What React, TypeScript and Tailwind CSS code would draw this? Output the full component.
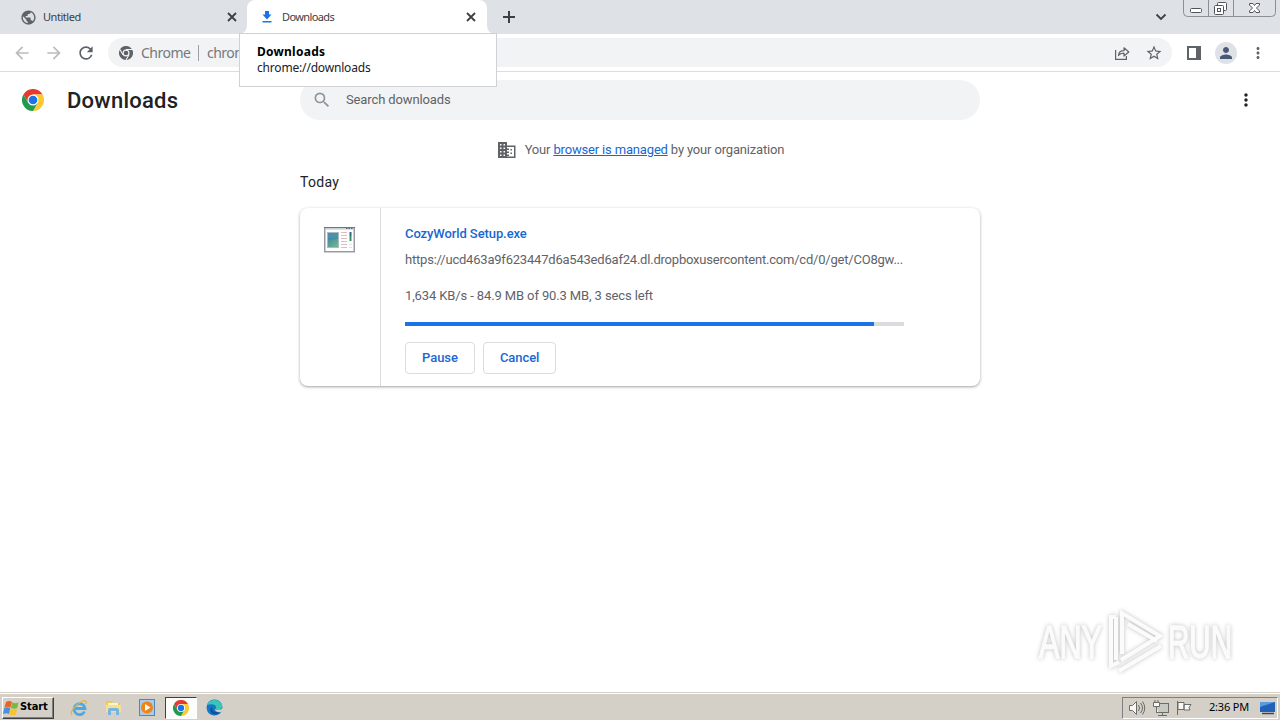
import type { ReactNode } from "react";
import {
  MdArrowBack,
  MdArrowForward,
  MdMoreVert,
  MdPerson,
  MdPublic,
  MdRefresh,
  MdSearch,
  MdStarBorder,
} from "react-icons/md";

function ChromeLogo({ size, mono = false }: { size: number; mono?: boolean }) {
  const red = mono ? "#5f6368" : "#e33b2e";
  const green = mono ? "#5f6368" : "#229a4b";
  const yellow = mono ? "#5f6368" : "#fcc934";
  return (
    <svg width={size} height={size} viewBox="0 0 48 48" className="shrink-0">
      <path d="M24 12h20.8A24 24 0 0 0 3.2 12l10.4 18z" fill={red} />
      <path d="M34.4 30 24 48A24 24 0 0 0 44.8 12H24z" fill={yellow} />
      <path d="M13.6 30 3.2 12A24 24 0 0 0 24 48l10.4-18z" fill={green} />
      {mono && (
        <path d="M24 12h22M34.4 30 23 50M13.6 30 2 10" stroke="#f1f3f4" strokeWidth="3.5" />
      )}
      <circle cx="24" cy="24" r="12" fill={mono ? "#f1f3f4" : "#fff"} />
      <circle cx="24" cy="24" r={mono ? 8 : 9.5} fill={mono ? "#5f6368" : "#1a73e8"} />
    </svg>
  );
}

function CloseIcon() {
  return (
    <svg width="14" height="14" viewBox="0 0 14 14">
      <path d="m3 3 8 8M11 3l-8 8" stroke="#3c4043" strokeWidth="1.800" />
    </svg>
  );
}

function TabStrip() {
  return (
    <div className="flex h-[34px] shrink-0 bg-[#dee1e6] font-['Noto_Sans',sans-serif] text-[11px] text-[#3c4043]">
      <div className="flex w-[247px] items-center pl-5">
        <MdPublic size={17} className="text-[#5f6368]" />
        <span className="ml-[6px] w-[182px] tracking-[-0.45px]">Untitled</span>
        <CloseIcon />
      </div>
      <div className="relative flex w-[240px] items-center rounded-t-lg bg-white pl-[15px]">
        <svg width="8" height="8" className="absolute bottom-0 -left-2">
          <path d="M8 0v8H0a8 8 0 0 0 8-8z" fill="#fff" />
        </svg>
        <svg width="8" height="8" className="absolute -right-2 bottom-0">
          <path d="M0 0v8h8a8 8 0 0 1-8-8z" fill="#fff" />
        </svg>
        <svg width="10" height="12" viewBox="0 0 10 12" fill="#1a73e8">
          <path d="M3 0h4v3.500h2.500L5 8.500.500 3.500H3zM.500 10h9v1.500h-9z" />
        </svg>
        <span className="ml-[10px] w-[182px] tracking-[-0.62px]">Downloads</span>
        <CloseIcon />
      </div>
      <svg width="14" height="14" viewBox="0 0 14 14" className="mt-[10px] ml-[15px]">
        <path d="M7 1v12M1 7h12" stroke="#3c4043" strokeWidth="2" />
      </svg>
      <div className="ml-auto flex">
        <svg width="12" height="8" viewBox="0 0 12 8" className="mt-[13px] mr-[16px]">
          <path d="M1.500 1.500 6 6l4.500-4.500" fill="none" stroke="#3c4043" strokeWidth="1.800" />
        </svg>
        <WindowControls />
      </div>
    </div>
  );
}

function WindowControls() {
  return (
    <svg width="93" height="17" viewBox="0 0 93 17" className="mr-1" fill="none">
      <path d="M.5 0v12.500q0 4 4 4h84q4 0 4-4V0M25.500 0v16M50.500 0v16" stroke="#8b8f96" />
      <g stroke="#50545c" fill="#fff">
        <rect x="7.500" y="8.500" width="11" height="4" rx="1" />
        <rect x="34.500" y="2.500" width="9" height="8" rx="1" />
        <rect x="31.500" y="5.500" width="9" height="9" rx="1" />
        <rect x="34.500" y="8.500" width="3" height="3" />
        <path d="M66.500 3.500h3.500l1.500 2 1.500-2h3.500v1.500l-3 3 3 3v1.500H73l-1.500-2-1.500 2h-3.500v-1.500l3-3-3-3z" />
      </g>
    </svg>
  );
}

function Toolbar() {
  return (
    <div className="flex h-[38px] shrink-0 items-center border-b border-[#dadce0] bg-white pl-3 text-[#5f6368]">
      <MdArrowBack size={20} className="text-[#babcbe]" />
      <MdArrowForward size={20} className="ml-3 text-[#babcbe]" />
      <MdRefresh size={20} className="ml-3" />
      <div className="ml-[12px] flex h-[29px] w-[1064px] items-center rounded-full bg-[#f1f3f4] pl-[11px] font-['Noto_Sans',sans-serif] text-sm">
        <ChromeLogo size={14} mono />
        <span className="ml-2 w-[57px] tracking-[-0.5px] text-[#75797e]">Chrome</span>
        <span className="h-4 w-px bg-[#9aa0a6]" />
        <span className="ml-2 tracking-[-0.5px] text-[#75797e]">chrome://downloads</span>
        <svg width="16" height="16" viewBox="0 0 16 16" className="ml-auto" fill="none" stroke="#5f6368" strokeWidth="1.200">
          <path d="M1.600 5v9.400h10.800V11" />
          <path d="M4.500 10.500c.3-3.500 2.500-4.800 5.500-4.800V2.800l4.800 4.200L10 11V8.200c-2.500 0-4.200.6-5.500 2.300z" strokeLinejoin="round" />
        </svg>
        <MdStarBorder size={18} className="mr-[9px] ml-[15px]" />
      </div>
      <svg width="14" height="14" viewBox="0 0 14 14" className="ml-[15px]">
        <path d="M0 0h14v14H0zM2 2v10h7V2z" fill="#5f6368" fillRule="evenodd" />
      </svg>
      <div className="ml-[14px] flex size-[22px] items-center justify-center rounded-full bg-[#dee1e6]">
        <MdPerson size={18} className="text-[#4a5878]" />
      </div>
      <MdMoreVert size={18} className="ml-[12px]" />
    </div>
  );
}

function TabTooltip() {
  return (
    <div className="absolute top-[33px] left-[239px] h-[54px] w-[258px] border border-[#cfd1d4] bg-white pt-[10px] pl-[17px] font-['Noto_Sans',sans-serif] text-[12px] leading-4 text-[#202124]">
      <div className="font-bold tracking-[0.25px] text-black">Downloads</div>
      <div className="tracking-[-0.18px]">chrome://downloads</div>
    </div>
  );
}

function PageHeader() {
  return (
    <div className="flex h-14 shrink-0 items-center">
      <div className="flex w-[300px] items-center pl-[22px]">
        <ChromeLogo size={22} />
        <h1 className="ml-[23px] text-[22px] font-medium tracking-[0.25px] text-[#202124]">Downloads</h1>
      </div>
      <div className="flex h-10 w-[680px] items-center rounded-full bg-[#f1f3f4] pl-3 text-[13px] text-[#5f6368]">
        <MdSearch size={20} className="text-[#909498]" />
        <span className="ml-[14px] tracking-[-0.12px]">Search downloads</span>
      </div>
      <MdMoreVert size={20} className="mr-6 ml-auto text-[#202124]" />
    </div>
  );
}

function ActionButton({ children }: { children: ReactNode }) {
  return (
    <button className="h-8 rounded border border-[#dadce0] px-4 text-[13px] font-medium tracking-[-0.05px] text-[#1967d2]">
      {children}
    </button>
  );
}

function ExeIcon() {
  return (
    <svg width="32" height="27" viewBox="0 0 32 27">
      <defs>
        <linearGradient id="exe" x1="0" y1="0" x2="0.6" y2="1">
          <stop offset="0" stopColor="#4f86bd" />
          <stop offset="0.5" stopColor="#4b96a0" />
          <stop offset="1" stopColor="#6bb583" />
        </linearGradient>
      </defs>
      <rect x=".75" y="1.750" width="29.500" height="24" fill="#fff" stroke="#989ca2" strokeWidth="1.500" />
      <path d="M1.500 3h28" stroke="#ccd3dc" strokeWidth="1.500" />
      <path d="M0 1.500h31" stroke="#70757c" />
      <path d="M22 2.500h1.500m1 0H26m1 0h1.500" stroke="#596672" />
      <rect x="3.500" y="6.500" width="11" height="15" fill="url(#exe)" stroke="#a9bcc6" />
      <path d="M4 13c4-1 7 1 10-2" stroke="#3a86a5" fill="none" />
      <path d="M17 6.500h6M17 9.500h6M17 12.500h6M17 15.500h6M17 18.500h6M17 21.500h6" stroke="#e0bdbd" />
      <path d="M26.500 6v4" stroke="#2b5fa0" strokeWidth="2" />
      <path d="M26.500 10v5" stroke="#369060" strokeWidth="2" />
      <path d="M25 18.500h3M25 21.500h3" stroke="#dfe3e6" />
    </svg>
  );
}

function DownloadCard() {
  const received = 84.9;
  const total = 90.3;
  return (
    <div className="flex h-[178px] w-[680px] rounded-lg bg-white shadow-[0_1px_2px_rgba(60,64,67,0.3),0_1px_3px_1px_rgba(60,64,67,0.15)]">
      <div className="flex w-[81px] justify-center border-r border-[#dadce0] pt-[18px]">
        <ExeIcon />
      </div>
      <div className="flex flex-col pl-6 text-[13px] leading-5 text-[#5f6368]">
        <div className="mt-4 font-medium tracking-[-0.09px] text-[#1967d2]">CozyWorld Setup.exe</div>
        <div className="mt-[6px] w-[520px] tracking-[-0.21px] whitespace-nowrap">
          https://ucd463a9f623447d6a543ed6af24.dl.dropboxusercontent.com/cd/0/get/CO8gw...
        </div>
        <div className="mt-4 tracking-[-0.12px]">1,634 KB/s - 84.9 MB of 90.3 MB, 3 secs left</div>
        <div className="mt-4 h-1 w-[499px] bg-[#dadce0]">
          <div className="h-full bg-[#1a73e8]" style={{ width: `${(received / total) * 100}%` }} />
        </div>
        <div className="mt-4 flex gap-2">
          <ActionButton>Pause</ActionButton>
          <ActionButton>Cancel</ActionButton>
        </div>
      </div>
    </div>
  );
}

function Watermark() {
  return (
    <svg
      width="210"
      height="70"
      viewBox="0 0 210 70"
      className="absolute top-[605px] left-[1034px] overflow-visible drop-shadow-[0_0_2px_rgba(0,0,0,0.25)]"
      fill="#fbfbfb"
    >
      <g fontFamily="Liberation Sans" fontSize="47" stroke="#fbfbfb" strokeWidth="1.500">
        <text x="5" y="53" textLength="63" lengthAdjust="spacingAndGlyphs">ANY</text>
        <text x="134" y="53" textLength="64" lengthAdjust="spacingAndGlyphs">RUN</text>
      </g>
      <g fill="none" stroke="#fbfbfb" strokeWidth="4">
        <path d="M88 49V8l38 23-39 24M94 19l29 17" />
        <path d="M82 12h-5v49l8-4M82 12v43M85 66l42-25" />
      </g>
    </svg>
  );
}

function StartFlag() {
  return (
    <svg width="17" height="16" viewBox="0 0 17 16" className="shrink-0">
      <path d="M3 2q3-2 6 0L7.500 7.500Q5 6 1.500 7.500z" fill="#e8622c" />
      <path d="M9.500 2.300q3 1.700 6 0L14.300 8q-3 1.500-6.500 0z" fill="#7db83c" />
      <path d="M1.300 8q3-1.700 6 0L6 14q-3-1.700-6 0z" fill="#4a8fd8" />
      <path d="M7.700 8.500q3 1.700 6.500 0L13 14.500q-3 1.700-6.500 0z" fill="#f7c331" />
    </svg>
  );
}

function Taskbar() {
  return (
    <div className="flex h-[28px] shrink-0 items-center border-t border-[#d4d0c8] bg-[#d4d0c8] pl-[2px] shadow-[inset_0_1px_0_#fff]">
      <button className="mt-[2px] flex h-[22px] w-[52px] items-center border border-t-white border-r-[#404040] border-b-[#404040] border-l-white font-['DejaVu_Sans_Condensed','DejaVu_Sans',sans-serif] text-[11px] font-bold text-black shadow-[inset_-1px_-1px_0_#808080]">
        <StartFlag />
        <span className="tracking-[-0.1px]">Start</span>
      </button>
      <svg width="18" height="18" viewBox="0 0 18 18" className="mt-[2px] ml-4" fill="none">
        <path d="M14.500 12.500a5.500 5.500 0 1 1 .5-3H5" stroke="#4aa9e6" strokeWidth="2.800" />
        <path d="M2 16c-3-2 3-10 9-13 5-2.500 6-1 4.500 2" stroke="#e6b63b" strokeWidth="1.300" />
      </svg>
      <svg width="17" height="17" viewBox="0 0 17 17" className="mt-[2px] ml-[17px]">
        <path d="M1 2h6l1 2h7v9H1z" fill="#e9c964" />
        <path d="M3 4h10v6H3z" fill="#fff5c4" />
        <path d="M1 6h15v7H1z" fill="#f5df94" />
        <path d="M3 16v-5q0-2 2-2h7q2 0 2 2v5h-3v-4H6v4z" fill="#75b5de" />
      </svg>
      <svg width="16" height="17" viewBox="0 0 16 17" className="mt-[2px] ml-[17px]">
        <rect x=".5" y=".5" width="15" height="16" fill="#a9cbec" stroke="#5285b8" />
        <circle cx="8" cy="8.500" r="6" fill="#ef8316" />
        <path d="M6 5v7l5.500-3.500z" fill="#fff" />
      </svg>
      <div className="mt-[2px] ml-[10px] flex h-[22px] w-[32px] items-center justify-center border border-t-[#404040] border-r-white border-b-white border-l-[#404040] bg-[#fcfcfb]">
        <ChromeLogo size={16} />
      </div>
      <svg width="17" height="17" viewBox="0 0 17 17" className="mt-[2px] ml-[9px]">
        <circle cx="8.500" cy="8.500" r="8" fill="#1677c6" />
        <path d="M1 6C3 0 13-1 16 5.500c1 3-1 5.500-4 5.500-2 0-2.500-1-2-2 1-3-4-5-9-3z" fill="#3ac5b5" />
        <path d="M6.500 8c-1.500 3 1 6 7.500 5-5 5-11 1-9.500-3 .3-1 1-2 2-2z" fill="#124f96" />
        <path d="M9.500 9q-.5 2 2.500 2 3 0 5-2v3q-3 2-6.500.5-2-1-1-3.500z" fill="#d4d0c8" />
      </svg>
      <div className="mt-[2px] mr-[2px] ml-auto flex h-[22px] w-[156px] items-center border border-t-[#808080] border-r-white border-b-white border-l-[#808080] pl-[5px]">
        <svg width="66" height="18" viewBox="0 0 66 18" fill="#f8f8f6" stroke="#6b6b68">
          <path d="M1.500 6.500h3l4-4v13l-4-4h-3z" />
          <path d="M10.500 6q2 3 0 6M12.500 4q4 5 0 10M14.500 2.500q4.500 6.500 0 13" fill="none" />
          <rect x="28.500" y="4.500" width="12" height="9" fill="#c9c9c4" />
          <path d="M30 16.500h9M34.500 14v2" />
          <path d="M25.500 3.500h6v4h-6zM27 1v2M30 1v2M28.500 8v5.500h2" />
          <path d="M49.500 2v14M50 3.500h6v7h-6zM56 5.500h7l-2 3 1 2.500h-6z" />
        </svg>
        <span className="ml-[15px] w-[46px] font-['Noto_Sans',sans-serif] text-[11px] tracking-[-0.2px] whitespace-nowrap text-black">2:36 PM</span>
        <svg width="16" height="14" viewBox="0 0 16 14" className="ml-[5px]">
          <path d="M0 1h15v10H0z" fill="#2161b8" />
          <path d="M0 1h15L0 6z" fill="#5c9ae0" />
          <path d="M2 12.500h12" stroke="#3c4654" strokeWidth="1.500" />
        </svg>
      </div>
    </div>
  );
}

function ManagedNotice() {
  return (
    <div className="mt-3 flex h-5 w-[680px] items-center justify-center pl-[2px] text-[13px] text-[#5f6368]">
      <svg width="18" height="16" viewBox="0 0 18 16" className="mr-[9px]" fill="#5f6368">
        <path
          fillRule="evenodd"
          d="M0 0h9v3.500h8.500V16H0zM2 2v1.500h1.500V2zm3.500 0v1.500H7V2zM2 5.500V7h1.500V5.500zm3.500 0V7H7V5.500zM2 9v1.500h1.500V9zm3.500 0v1.500H7V9zM2 12.500V14h1.500v-1.500zm3.500 0V14H7v-1.500zM9 5v1.500h2V8H9v1.500h2V11H9v1.500h2V14H9v.5h7V5z"
        />
        <path d="M12.500 7H14v1.500h-1.500zM12.500 10.500H14V12h-1.500z" />
      </svg>
      <span className="tracking-[-0.165px]">
        Your <a className="text-[#1967d2] underline">browser is managed</a> by your organization
      </span>
    </div>
  );
}

export default function App() {
  return (
    <div className="relative flex h-[720px] w-[1280px] flex-col overflow-hidden bg-white font-['Roboto',sans-serif]">
      <TabStrip />
      <Toolbar />
      <PageHeader />
      <main className="flex flex-1 flex-col pl-[300px]">
        <ManagedNotice />
        <h2 className="mt-3 mb-4 text-sm leading-5 tracking-[0.3px] text-[#202124]">Today</h2>
        <DownloadCard />
      </main>
      <Taskbar />
      <TabTooltip />
      <Watermark />
    </div>
  );
}
